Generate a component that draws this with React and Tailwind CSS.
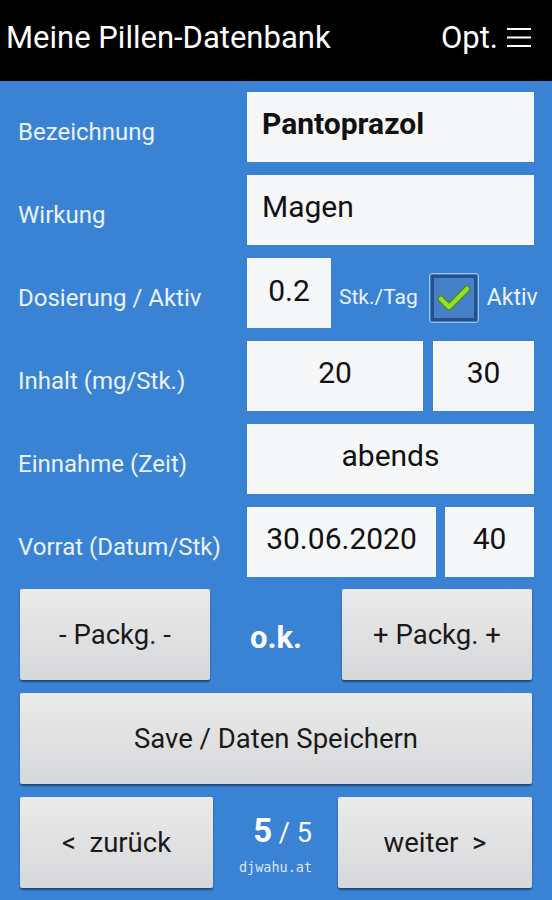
import React from 'react';

const Field = ({ children, className = '' }) => (
  <div className={`h-[70px] shrink-0 bg-[#f6f7f9] flex items-center text-[30px] text-[#111] leading-none ${className}`}>
    {children}
  </div>
);

const Btn = ({ children, className = '' }) => (
  <button className={`h-[91px] bg-gradient-to-b from-[#ebebeb] to-[#d6d7d9] rounded-[2px] shadow-[0_2px_2px_rgba(0,0,0,0.45)] text-[27.5px] text-[#1a1a1a] whitespace-pre flex items-center justify-center leading-none ${className}`}>
    {children}
  </button>
);

const Row = ({ label, children }) => (
  <div className="flex h-[70px]">
    <div className="w-[229px] shrink-0 flex items-center pt-[10px] text-[24px] text-[#eaf2fb] whitespace-nowrap">{label}</div>
    <div className="flex-1 flex items-center">{children}</div>
  </div>
);

const App = () => {
  return (
    <div className="w-[552px] h-[900px] bg-[#3a83d4] font-['Roboto',sans-serif] overflow-hidden">
      {/* Header */}
      <div className="h-[81px] bg-black flex items-center justify-between pl-[6px] pr-[20px] pb-[6px] text-white">
        <span className="text-[31px] leading-none">Meine Pillen-Datenbank</span>
        <span className="flex items-center gap-[8px] text-[31px] leading-none">
          Opt.
          <svg width="26" height="23" viewBox="0 0 26 23">
            <path d="M1 3h24M1 11.5h24M1 20h24" stroke="white" strokeWidth="2.2" />
          </svg>
        </span>
      </div>

      {/* Form */}
      <div className="pl-[18px] pr-[18px] pt-[11px] flex flex-col gap-[13px]">
        <Row label="Bezeichnung">
          <Field className="flex-1 pl-[15px] pb-[6px] font-bold">Pantoprazol</Field>
        </Row>
        <Row label="Wirkung">
          <Field className="flex-1 pl-[15px] pb-[6px]">Magen</Field>
        </Row>
        <Row label="Dosierung / Aktiv">
          <Field className="w-[84px] justify-center pb-[4px]">0.2</Field>
          <div className="flex shrink-0 items-center mt-[10px] whitespace-nowrap">
            <span className="ml-[8px] text-[21px] text-[#eaf2fb]">Stk./Tag</span>
            <div className="ml-[11px] w-[50px] h-[50px] shrink-0 rounded-[3px] border border-[#9cc0ea] p-[1px]">
              <div className="w-full h-full bg-[#4580c9] border-[3px] border-[#284f86] flex items-center justify-center">
                <svg width="34" height="28" viewBox="0 0 34 28">
                  <path d="M4 15 L12 23 L30 5" fill="none" stroke="#4f8a14" strokeWidth="7" strokeLinecap="round" strokeLinejoin="round" />
                  <path d="M4 15 L12 23 L30 5" fill="none" stroke="#8ee032" strokeWidth="4.5" strokeLinecap="round" strokeLinejoin="round" />
                </svg>
              </div>
            </div>
            <span className="ml-[8px] text-[23px] text-[#eaf2fb]">Aktiv</span>
          </div>
        </Row>
        <Row label="Inhalt (mg/Stk.)">
          <Field className="w-[176px] justify-center pb-[6px]">20</Field>
          <Field className="flex-1 ml-[10px] justify-center pb-[6px]">30</Field>
        </Row>
        <Row label="Einnahme (Zeit)">
          <Field className="flex-1 justify-center pb-[6px]">abends</Field>
        </Row>
        <Row label="Vorrat (Datum/Stk)">
          <Field className="w-[189px] justify-center pb-[6px]">30.06.2020</Field>
          <Field className="flex-1 ml-[9px] justify-center pb-[6px]">40</Field>
        </Row>
      </div>

      {/* Buttons */}
      <div className="px-[20px] mt-[12px] flex flex-col gap-[13px]">
        <div className="flex items-center">
          <Btn className="w-[190px]">- Packg. -</Btn>
          <div className="flex-1 text-center text-white font-bold text-[31px] pt-[8px]">o.k.</div>
          <Btn className="w-[190px]">+ Packg. +</Btn>
        </div>
        <Btn className="w-full h-[90px]">Save / Daten Speichern</Btn>
        <div className="flex items-center">
          <Btn className="w-[193px]">{'<  zurück'}</Btn>
          <div className="flex-1 flex flex-col items-center pt-[6px]">
            <div className="text-white leading-none ml-[14px]">
              <span className="font-bold text-[33px]">5</span>
              <span className="text-[27px]"> / 5</span>
            </div>
            <div className="mt-[10px] font-['DejaVu_Sans_Mono',monospace] text-[13.5px] text-[#dbe8f7]">djwahu.at</div>
          </div>
          <Btn className="w-[194px]">{'weiter  >'}</Btn>
        </div>
      </div>
    </div>
  );
};

export default App;
